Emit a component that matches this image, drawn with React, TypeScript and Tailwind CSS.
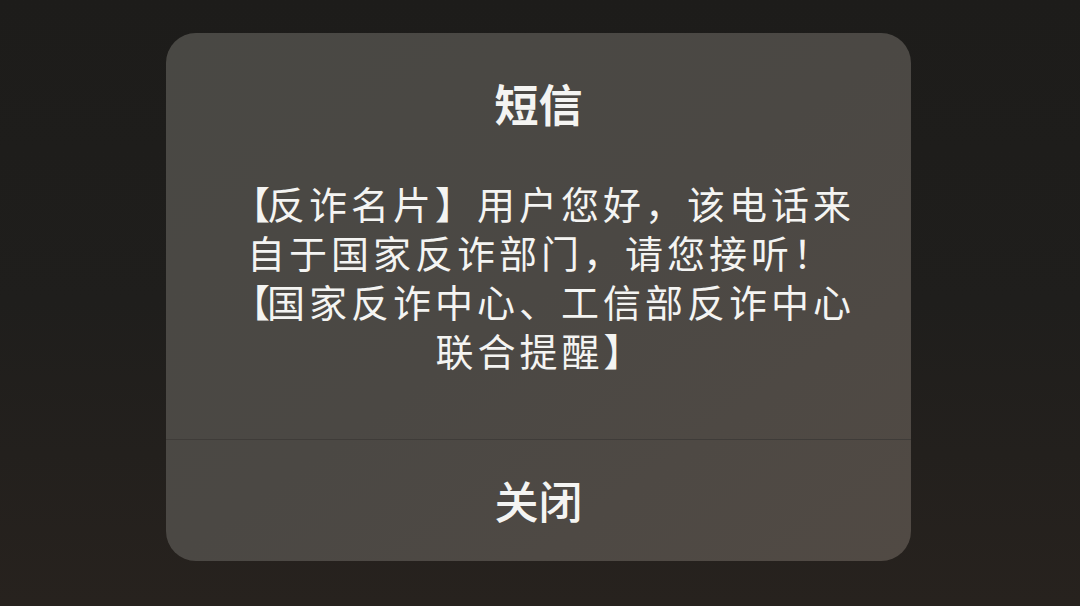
function LeadBracket() {
  // 行首的【只占半个字宽
  return <span className="ml-[-15px] tracking-[-3px]">【</span>
}

export default function App() {
  return (
    <div
      className="flex h-[606px] w-[1080px] items-start overflow-hidden bg-gradient-to-b from-[#1d1c1a] via-[#1f1e1c] to-[#27221e] pl-[166px] pt-[33px]"
      style={{ fontFamily: '"Noto Sans CJK SC", "Noto Sans", sans-serif' }}
    >
      <div className="flex h-[528px] w-[745px] flex-col rounded-[30px] bg-gradient-to-br from-[#494844] via-[#4b4844] to-[#514a44] text-[#f4f4f2]">
        <div className="pt-[42px] text-center text-[44px] font-bold leading-[56px]">短信</div>
        <div className="mt-[47px] flex flex-col text-[38px] leading-[49px] tracking-[4px]">
          <div className="whitespace-nowrap pl-[81px]">
            <LeadBracket />
            反诈名片】用户您好，该电话来
          </div>
          <div className="whitespace-nowrap pl-[81px]">自于国家反诈部门，请您接听！</div>
          <div className="whitespace-nowrap pl-[81px]">
            <LeadBracket />
            国家反诈中心、工信部反诈中心
          </div>
          <div className="pl-[4px] text-center">联合提醒】</div>
        </div>
        <div className="mt-auto h-px bg-[#3f3c39]" />
        <div className="flex h-[121px] items-center justify-center pb-[2px] text-[44px] font-medium">
          关闭
        </div>
      </div>
    </div>
  )
}
